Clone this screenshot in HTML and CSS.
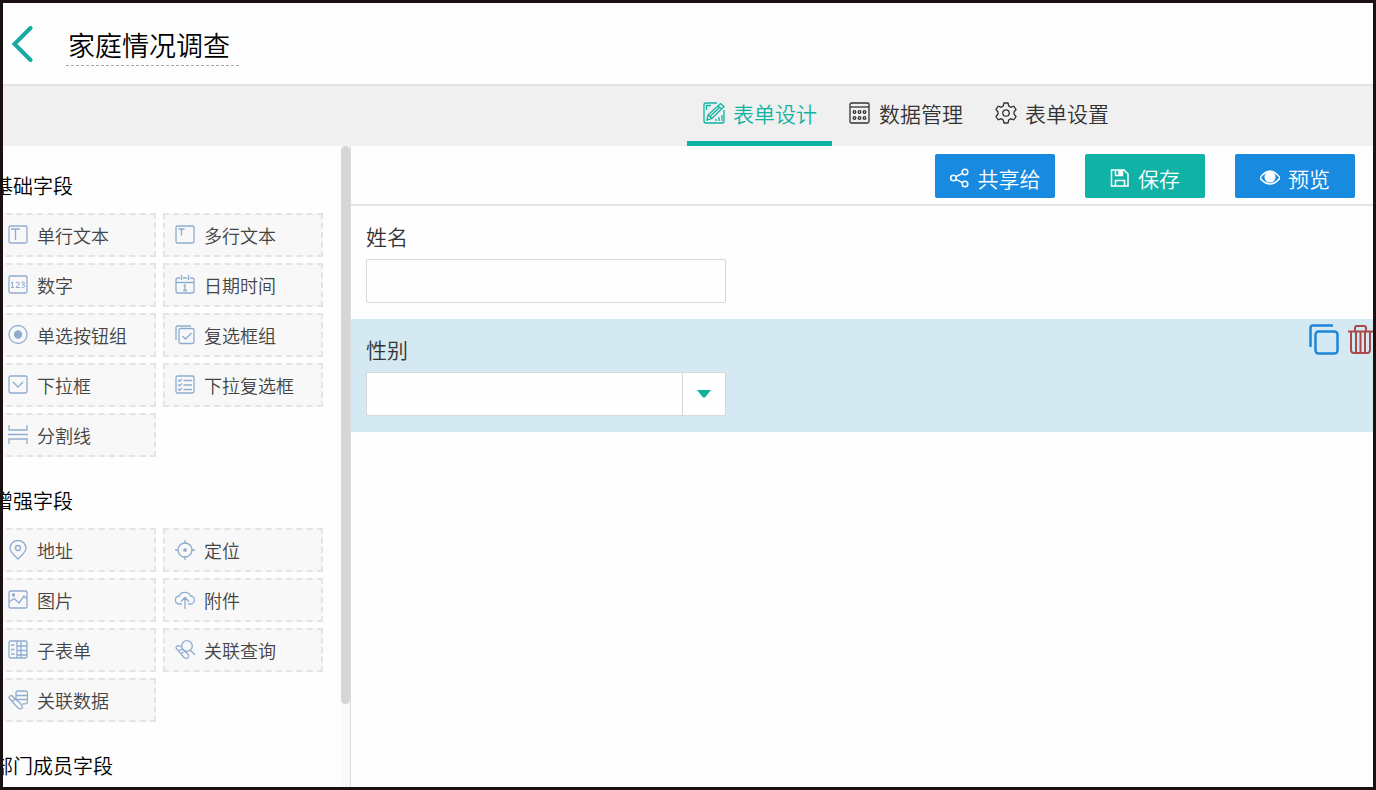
FILE: index.html
```html
<!DOCTYPE html>
<html lang="zh-CN">
<head>
<meta charset="utf-8">
<title>家庭情况调查</title>
<link rel="stylesheet" href="styles.css">
</head>
<body>
<div class="app">
  <header class="header">
    <button class="back" type="button" aria-label="返回">
      <svg width="22" height="36" viewBox="0 0 22 36"><path d="M19.500 2L3.500 18l16 16"/></svg>
    </button>
    <h1 class="title">家庭情况调查</h1>
  </header>

  <nav class="tabs">
    <a class="tab tab-active" href="#design">
      <svg class="tab-icon" viewBox="0 0 22 22"><path d="M14 1H3a2 2 0 0 0-2 2v16a2 2 0 0 0 2 2h16a2 2 0 0 0 2-2V8M3.500 8V3.500H8M4 18l1-5L17.500 1.500l3.500 3L9 16.500zM5 13l4 3.500M15 4l3.500 3M7.500 14L17 5M13 19v-2M16 19v-4M19 19v-6"/></svg>
      <span>表单设计</span>
    </a>
    <a class="tab" href="#data">
      <svg class="tab-icon" viewBox="0 0 22 22"><rect x="1" y="1" width="19" height="20" rx="1.500"/><path d="M1 5h19"/><circle cx="5.500" cy="10" r="1.300"/><circle cx="10.500" cy="10" r="1.300"/><circle cx="15.500" cy="10" r="1.300"/><circle cx="5.500" cy="16" r="1.300"/><circle cx="10.500" cy="16" r="1.300"/><circle cx="15.500" cy="16" r="1.300"/></svg>
      <span>数据管理</span>
    </a>
    <a class="tab" href="#settings">
      <svg class="tab-icon" viewBox="0 0 22 22"><circle cx="11" cy="11" r="3.200"/><path d="M9 1h4l.8 3 2 1.200 3-1L21 7.500 19 10v2l2 2.500-2.200 3.300-3-1-2 1.200L13 21H9l-.8-3-2-1.200-3 1L1 14.500 3 12v-2L1 7.500l2.200-3.300 3 1L8.200 4z"/></svg>
      <span>表单设置</span>
    </a>
  </nav>

  <div class="workspace">
    <aside class="sidebar">
      <div class="palette">
        <section class="group">
          <h2 class="group-title">基础字段</h2>
          <div class="fields">
            <button class="field" type="button"><svg class="icon" viewBox="0 0 20 20"><rect x="1" y="1" width="18" height="17" rx="1.500"/><path d="M3 4h9M7.500 4v11"/></svg>单行文本</button>
            <button class="field" type="button"><svg class="icon" viewBox="0 0 20 20"><rect x="1" y="1" width="18" height="17" rx="1.500"/><path d="M3.500 4h6M6.500 4v6.500"/></svg>多行文本</button>
            <button class="field" type="button"><svg class="icon" viewBox="0 0 20 20"><rect x="1" y="1" width="18" height="17" rx="1.500"/><path class="fine" d="M3 8l1.500-1v5.500M3 12.500h3M8 8q1.500-2 3.500 0 0 1.500-3.500 4.500h4M13.500 7.500q3-1.500 3 .5 0 1.500-2 1.700 2.500 0 2.300 1.800-.8 1.700-3.300.7"/></svg>数字</button>
            <button class="field" type="button"><svg class="icon" viewBox="0 0 20 20"><path d="M5 3H3a2 2 0 0 0-2 2v11a2 2 0 0 0 2 2h14a2 2 0 0 0 2-2V5a2 2 0 0 0-2-2h-2M8 3h4M1 7.500h18M6.500 0v5M13.500 0v5M8.500 11l1.500-1v5.500M8 15.500h4"/></svg>日期时间</button>
            <button class="field" type="button"><svg class="icon" viewBox="0 0 20 20"><circle cx="10" cy="9.500" r="9"/><circle class="solid" cx="10" cy="9.500" r="3.500"/></svg>单选按钮组</button>
            <button class="field" type="button"><svg class="icon" viewBox="0 0 20 20"><rect x="4" y="3.500" width="15" height="15" rx="1.500"/><path d="M1 15V2.500Q1 1 2.500 1H16M7.500 11l3 3 6-6"/></svg>复选框组</button>
            <button class="field" type="button"><svg class="icon" viewBox="0 0 20 20"><rect x="1" y="1" width="18" height="17" rx="1.500"/><path d="M5 7l5 5 5-5"/></svg>下拉框</button>
            <button class="field" type="button"><svg class="icon" viewBox="0 0 20 20"><rect x="1" y="1" width="18" height="17" rx="1.500"/><path d="M3 5l1.500 1.300L7 4M3 9.500l1.500 1.300L7 8.500M3 14l1.500 1.300L7 13M8.500 5.500H17M8.500 10H17M8.500 14.500H17"/></svg>下拉复选框</button>
            <button class="field" type="button"><svg class="icon" viewBox="0 0 20 20"><path d="M1 0v5h18V0M0 9.500h20M1 19v-5h18v5"/></svg>分割线</button>
          </div>
        </section>
        <section class="group">
          <h2 class="group-title">增强字段</h2>
          <div class="fields">
            <button class="field" type="button"><svg class="icon" viewBox="0 0 20 20"><path d="M10 19C6 15 2 12 2 8a8 7.500 0 0 1 16 0c0 4-4 7-8 11z"/><circle cx="10" cy="8" r="2.500"/></svg>地址</button>
            <button class="field" type="button"><svg class="icon" viewBox="0 0 20 20"><circle cx="10" cy="10" r="7"/><circle class="solid" cx="10" cy="10" r="1.200"/><path d="M10 0v4M10 16v4M0 10h4M16 10h4"/></svg>定位</button>
            <button class="field" type="button"><svg class="icon" viewBox="0 0 20 20"><rect x="1" y="1" width="18" height="17" rx="1.500"/><circle class="solid" cx="5.500" cy="5" r="1"/><path d="M1 12l5-3.500 5 4.500 5-7 3 3"/></svg>图片</button>
            <button class="field" type="button"><svg class="icon" viewBox="0 0 20 20"><path d="M7 14H4.500a4 4 0 0 1-.3-8A6 5.500 0 0 1 15.500 6a4 4 0 0 1 0 8H13M10 19V7.500M6 11.500l4-4 4 4"/></svg>附件</button>
            <button class="field" type="button"><svg class="icon" viewBox="0 0 20 20"><rect x="1" y="1" width="18" height="17" rx="1.500"/><path d="M9 1v17M13 1v17M3 5h3.500M3 9.500h3.500M3 14h3.500M9 6h10M9 10.500h10M9 15h10"/></svg>子表单</button>
            <button class="field" type="button"><svg class="icon" viewBox="0 0 20 20"><circle cx="12" cy="6" r="5.300"/><path d="M15.500 10.500L20 15M7 7L3.500 5.700Q1 5.500 1 8l8 9.500q3 2 4.500-.5 1-2-3.500-5.500M4 11l3-2 3 2.500M6 14l2.500-2"/></svg>关联查询</button>
            <button class="field" type="button"><svg class="icon" viewBox="0 0 20 20"><path d="M8 5V2.500Q8 1 10 1h7.500q2 0 2 2v9.500q-1 1.500-5 1.500M8 5.500h11M8.500 9.500h11M8 5v4M7 9L4 5.700Q1 5 1 8l9 10q3 2 4.500-.5 0-2-3.500-5.500M4 11.500l3-2.500 4 3"/></svg>关联数据</button>
          </div>
        </section>
        <section class="group">
          <h2 class="group-title">部门成员字段</h2>
        </section>
      </div>
      <div class="scrollbar"><div class="thumb"></div></div>
    </aside>

    <main class="canvas">
      <div class="toolbar">
        <button class="action" type="button">
          <svg class="action-icon" viewBox="0 0 20 20"><circle cx="3.500" cy="10" r="2.800"/><circle cx="15" cy="4" r="2.800"/><circle cx="15" cy="16" r="2.800"/><path d="M6 8.700l6.500-3.400M6 11.300l6.500 3.400"/></svg>
          <span>共享给</span>
        </button>
        <button class="action action-save" type="button">
          <svg class="action-icon" viewBox="0 0 20 20"><path d="M1.500 2H14l4 4v12H1.500zM5.500 18v-5.500h9V18M5.500 2v5.500h7V2"/><path class="white" d="M9 3h3v4H9z"/></svg>
          <span>保存</span>
        </button>
        <button class="action" type="button">
          <svg class="action-icon" viewBox="0 0 20 20"><path d="M0 10Q10-4 20 10 10 22 0 10z"/><circle class="white" cx="10" cy="9" r="4.800"/></svg>
          <span>预览</span>
        </button>
      </div>
      <div class="row">
        <label class="label" for="name">姓名</label>
        <input class="control" id="name" type="text">
      </div>
      <div class="row row-selected">
        <label class="label" for="gender">性别</label>
        <div class="picker">
          <select class="control" id="gender"><option></option></select>
          <span class="picker-arrow"><svg width="14" height="8" viewBox="0 0 14 8"><path d="M0 0h14L8 7.500H6z"/></svg></span>
        </div>
        <div class="row-tools">
          <button class="tool tool-copy" type="button" aria-label="复制"><svg width="30" height="32" viewBox="0 0 30 32"><rect x="6.500" y="7.500" width="22" height="22" rx="3"/><path d="M1.500 23V4q0-2.500 2.500-2.500h20"/></svg></button>
          <button class="tool tool-delete" type="button" aria-label="删除"><svg width="26" height="32" viewBox="0 0 26 32"><path d="M0 7.500h26M7 7V4q0-2 2-2h7q2 0 2 2v3M3 8v18q0 3 3 3h13q3 0 3-3V8M8 8v21M12.500 8v21M17 8v21"/></svg></button>
        </div>
      </div>
    </main>
  </div>
</div>
</body>
</html>
```
FILE: styles.css
```css
* {
  box-sizing: border-box;
}

body {
  margin: 0;
  color: #333;
  font-family: "Noto Sans CJK SC", sans-serif;
  font-weight: 350;
}

button {
  margin: 0;
  padding: 0;
  border: 0;
  background: none;
  color: inherit;
  font: inherit;
  cursor: pointer;
}

svg {
  display: block;
  flex: none;
  fill: none;
  stroke: currentColor;
}

.app {
  display: flex;
  flex-direction: column;
  height: 100vh;
  border: 3px solid #1b1012;
  background: #fefefe;
  overflow: hidden;
}

.header {
  display: flex;
  align-items: center;
  gap: 33px;
  height: 83px;
  flex: none;
  padding-left: 8px;
  border-bottom: 2px solid #e2e2e2;
}

.back {
  color: #16aaa0;
  stroke-linecap: round;
  stroke-width: 4;
}

.title {
  margin: 3px 0 0;
  padding: 0 9px 0 2px;
  border-bottom: 1px dashed #aaa;
  color: #000;
  font-size: 27px;
  font-weight: 350;
  line-height: 40px;
}

.tabs {
  display: flex;
  gap: 1px;
  height: 60px;
  flex: none;
  padding-left: calc(50% - 1px);
  background: #f0f0f0;
}

.tab {
  display: flex;
  align-items: center;
  gap: 8px;
  padding: 0 15px 2px 16px;
  border-bottom: 5px solid transparent;
  color: #333;
  font-size: 21px;
  text-decoration: none;
  white-space: nowrap;
}

.tab-active {
  border-color: #10b2a2;
  color: #10b2a2;
}

.tab-icon {
  width: 22px;
  height: 22px;
  stroke-width: 1.3;
}

.workspace {
  display: flex;
  flex: 1;
  min-height: 0;
}

.sidebar {
  display: flex;
  width: 348px;
  flex: none;
  border-right: 1px solid #dcdcdc;
  overflow: hidden;
}

.palette {
  flex: 1;
  margin-left: -7px;
  padding-top: 25px;
}

.group {
  margin-bottom: 29px;
}

.group-title {
  margin: 0 0 12px -3px;
  color: #000;
  font-size: 20px;
  font-weight: 350;
  line-height: 30px;
}

.fields {
  display: grid;
  grid-template-columns: 160px 160px;
  gap: 6px 7px;
}

.field {
  display: flex;
  align-items: center;
  gap: 9px;
  height: 44px;
  padding-left: 10px;
  border: 2px dashed #e4e4e4;
  background: #f8f8f8;
  color: #444;
  font-size: 18px;
}

.icon {
  width: 20px;
  height: 20px;
  color: #8eacd0;
  stroke-width: 1.3;
}

.fine {
  stroke-width: 1;
}

.solid {
  fill: currentColor;
}

.scrollbar {
  width: 9px;
  background: #fafafa;
}

.thumb {
  height: 87%;
  border-radius: 5px;
  background: #d6d6d6;
}

.canvas {
  flex: 1;
  min-width: 0;
}

.toolbar {
  display: flex;
  justify-content: flex-end;
  gap: 30px;
  height: 60px;
  padding: 8px 18px 0 0;
  border-bottom: 2px solid #e4e4e4;
}

.action {
  display: flex;
  align-items: center;
  justify-content: center;
  gap: 8px;
  width: 120px;
  height: 44px;
  padding-top: 4px;
  border-radius: 2px;
  background: #188ae0;
  color: #fff;
  font-size: 21px;
  line-height: 30px;
}

.action-save {
  background: #10b2a6;
}

.action-icon {
  width: 20px;
  height: 20px;
  stroke-width: 1.5;
}

.white {
  fill: #fff;
}

.row {
  position: relative;
  padding: 16px 15px;
}

.row-selected {
  background: #d5e9f2;
}

.label {
  display: block;
  margin-bottom: 9px;
  font-size: 21px;
  line-height: 28px;
}

.control {
  display: block;
  width: 360px;
  height: 44px;
  padding: 0 12px;
  border: 1px solid #d8d8d8;
  border-radius: 2px;
  background: #fefefe;
  font: inherit;
  font-size: 20px;
  appearance: none;
}

.picker {
  position: relative;
  width: 360px;
}

.picker-arrow {
  position: absolute;
  top: 1px;
  right: 1px;
  bottom: 1px;
  display: flex;
  align-items: center;
  justify-content: center;
  width: 43px;
  border-left: 1px solid #d8d8d8;
  pointer-events: none;
}

.picker-arrow svg {
  fill: #10b298;
  stroke: none;
}

.row-tools {
  position: absolute;
  top: 5px;
  right: -1px;
  display: flex;
  gap: 9px;
}

.tool-copy {
  color: #1b87d6;
  stroke-width: 2.5;
}

.tool-delete {
  color: #a94a48;
  stroke-width: 2;
}
```
